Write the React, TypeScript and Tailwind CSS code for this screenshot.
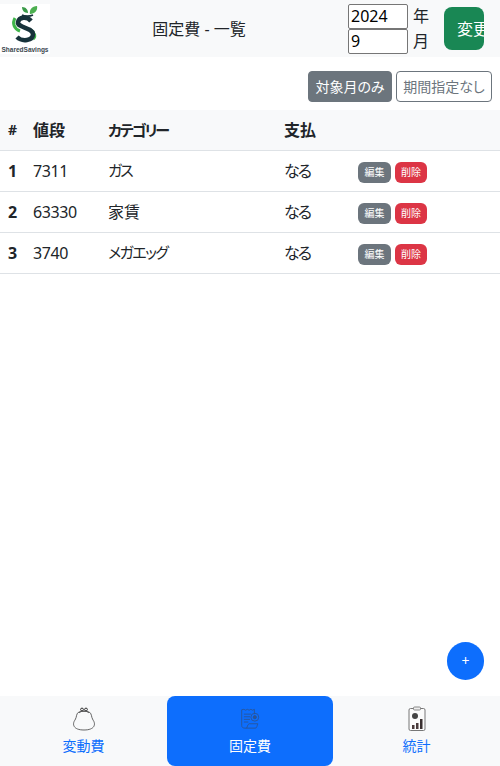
const rows = [
  { id: 1, price: 7311, category: "ガス", categoryClass: "pl-2 text-[15px] tracking-[-2px]", pay: "なる" },
  { id: 2, price: 63330, category: "家賃", categoryClass: "pl-2", pay: "なる" },
  { id: 3, price: 3740, category: "メガエッグ", categoryClass: "pl-2 text-[15px] tracking-[-1.6px]", pay: "なる" },
]

function Logo() {
  return (
    <div className="flex h-[50px] w-[50px] flex-col items-center bg-white">
      <svg viewBox="0 0 50 41" className="h-[41px] w-[50px]">
        <path d="M30 10 C29 6 32 2 37 2 C38 6 35 10 30 10 Z" fill="#4caf50" />
        <path d="M28 9 C28 6 26 3 22 3 C22 6 24 9 28 9 Z" fill="#3a9a48" />
        <path d="M22 11 C24 12.5 30 12.5 33 11" fill="none" stroke="#17323a" strokeWidth="1.6" />
        <path d="M15 14 C12 19 14 25 20 27 M31 26 C35 29 36 33 33 35" fill="none" stroke="#3fb54a" strokeWidth="3" />
        <path d="M31 17 C27 12 19 13 18 18 C17 24 32 23 33 30 C33 37 22 38 17 33" fill="none" stroke="#17323a" strokeWidth="4.5" />
      </svg>
      <span className="mt-[1px] font-['Liberation_Sans',sans-serif] text-[6.5px] leading-[8px] font-bold whitespace-nowrap text-[#3a474e]">SharedSavings</span>
    </div>
  )
}

function PurseIcon() {
  return (
    <svg viewBox="0 0 26 26" className="h-[26px] w-[26px]" fill="none" stroke="#555" strokeWidth="0.9">
      <circle cx="11" cy="3.5" r="1.4" stroke="#222" />
      <circle cx="15" cy="3.5" r="1.4" stroke="#222" />
      <path d="M8 7 C10 4.5 16 4.5 18 7" />
      <path d="M8 6 C5 7 6 11 4 14 C1 18 2 24 13 24 C24 24 25 18 22 14 C20 11 21 7 18 6 C16 5 10 5 8 6 Z" />
    </svg>
  )
}

function BillIcon() {
  return (
    <svg viewBox="0 0 22 24" className="mt-[2px] h-[21px] w-[20px]" fill="none" stroke="#2a5596" strokeWidth="1">
      <path d="M16 7 V1.5 L14 2.5 L12 1.5 L10 2.5 L8 1.5 L6 2.5 L4 1.5 L1.5 2 V20 C1.5 22 3 23 5 23 H17" />
      <path d="M4 7 H12 M4 10 H11 M4 13 H11 M4 16 H9" />
      <circle cx="16.5" cy="10.5" r="4.5" />
      <circle cx="16.5" cy="10.5" r="1.8" fill="#2a5596" />
      <path d="M7 23 C8 22 8 19 10 18 H20 C19 20 19 23 17 23" />
    </svg>
  )
}

function ReportIcon() {
  return (
    <svg viewBox="0 0 20 26" className="h-[26px] w-[20px]">
      <rect x="2" y="2.5" width="16" height="22" rx="1.5" fill="#fbfbfb" stroke="#777" />
      <rect x="6.5" y="1" width="7" height="3" rx="1" fill="#eee" stroke="#888" />
      <circle cx="8" cy="10" r="3" fill="#444" />
      <rect x="5" y="19" width="2.5" height="4" fill="#4a3b3b" />
      <rect x="9" y="17" width="2.5" height="6" fill="#4a3b3b" />
      <rect x="13" y="13" width="2.5" height="10" fill="#3a3030" />
    </svg>
  )
}

export default function App() {
  return (
    <div className="relative flex h-[766px] w-[500px] flex-col overflow-hidden bg-white font-['Noto_Sans','Noto_Sans_CJK_JP',sans-serif] text-[#212529]">
      <header className="flex h-[57px] items-center bg-[#f8f9fa]">
        <Logo />
        <h1 className="w-[298px] text-center text-base font-normal">固定費 - 一覧</h1>
        <div className="grid w-[60px] grid-cols-1">
          <input readOnly value="2024" className="h-[25px] w-[60px] rounded-[2px] border border-[#767676] bg-white px-[2px] text-base text-black" />
          <input readOnly value="9" className="h-[25px] w-[60px] rounded-[2px] border border-[#767676] bg-white px-[2px] text-base text-black" />
        </div>
        <div className="ml-[5px] flex w-[31px] flex-col text-base leading-[25px]">
          <span>年</span>
          <span>月</span>
        </div>
        <button className="h-[43px] w-[40px] overflow-hidden rounded-lg bg-[#198754] pl-[13px] text-left text-base whitespace-nowrap text-white">変更</button>
      </header>

      <div className="flex justify-end gap-1 pt-[14px] pr-2 pb-2 [font-feature-settings:'palt']">
        <button className="h-[31px] w-[84px] rounded border border-[#6c757d] bg-[#6c757d] text-sm text-white">対象月のみ</button>
        <button className="h-[31px] w-[96px] rounded border border-[#6c757d] bg-white text-sm text-[#6c757d]">期間指定なし</button>
      </div>

      <table className="w-[500px] table-fixed border-collapse text-left text-base [font-feature-settings:'palt']">
        <colgroup>
          <col className="w-[25px]" />
          <col className="w-[75px]" />
          <col className="w-[176px]" />
          <col className="w-[74px]" />
          <col />
        </colgroup>
        <thead className="bg-[#f8f9fa]">
          <tr className="h-[40px] border-b border-[#dee2e6]">
            <th className="pl-2 text-sm">#</th>
            <th className="pl-2">値段</th>
            <th className="pl-2 text-[15px] tracking-[-2px]">カテゴリー</th>
            <th className="pl-2">支払</th>
            <th />
          </tr>
        </thead>
        <tbody>
          {rows.map((row) => (
            <tr key={row.id} className="h-[41px] border-b border-[#dee2e6]">
              <td className="pl-2 font-bold">{row.id}</td>
              <td className="pl-2 tracking-[-0.4px]">{row.price}</td>
              <td className={row.categoryClass}>{row.category}</td>
              <td className="pl-2 tracking-[-2px]">{row.pay}</td>
              <td className="pt-[4px] pl-2">
                <div className="flex gap-1">
                  <button className="h-[21px] w-[33px] rounded-md bg-[#6c757d] text-[10px] text-white">編集</button>
                  <button className="h-[21px] w-[32px] rounded-md bg-[#dc3545] text-[10px] text-white">削除</button>
                </div>
              </td>
            </tr>
          ))}
        </tbody>
      </table>

      <div className="flex-1" />

      <button className="absolute top-[642px] left-[447px] flex h-[38px] w-[37px] items-center justify-center rounded-full bg-[#0d6efd] text-sm text-white">+</button>

      <nav className="grid h-[70px] grid-cols-[167px_166px_167px] bg-[#f8f9fa] text-sm">
        <a className="flex flex-col items-center pt-[10px] text-[#0d6efd]">
          <PurseIcon />
          <span className="mt-[4px]">変動費</span>
        </a>
        <a className="flex flex-col items-center rounded-lg bg-[#0d6efd] pt-[10px] text-white">
          <BillIcon />
          <span className="mt-[7px]">固定費</span>
        </a>
        <a className="flex flex-col items-center pt-[10px] text-[#0d6efd]">
          <ReportIcon />
          <span className="mt-[4px]">統計</span>
        </a>
      </nav>
    </div>
  )
}
